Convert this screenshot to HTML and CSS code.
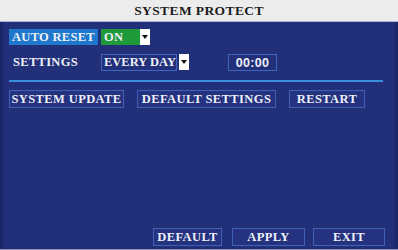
FILE: index.html
```html
<!DOCTYPE html>
<html lang="en">
<head>
	<meta charset="utf-8" />
	<title>System Protect</title>
	<link rel="stylesheet" href="styles.css">
</head>
<body>
	<div class="screen">
		<header class="title">SYSTEM PROTECT</header>
		<main class="panel">
			<div class="row">
				<span class="label label-active">AUTO RESET</span>
				<span class="combo combo-on">
					<span class="combo-value">ON</span>
					<span class="combo-arrow"></span>
				</span>
			</div>
			<div class="row row-settings">
				<span class="label">SETTINGS</span>
				<span class="combo combo-day">
					<span class="combo-value">EVERY DAY</span>
					<span class="combo-arrow"></span>
				</span>
				<span class="field">00:00</span>
			</div>
			<hr class="divider" />
			<div class="row row-actions">
				<button class="btn btn-update">SYSTEM UPDATE</button>
				<button class="btn btn-defaults">DEFAULT SETTINGS</button>
				<button class="btn btn-restart">RESTART</button>
			</div>
			<div class="footer">
				<button class="btn btn-default">DEFAULT</button>
				<button class="btn btn-apply">APPLY</button>
				<button class="btn btn-exit">EXIT</button>
			</div>
		</main>
	</div>
</body>
</html>
```

FILE: styles.css
```css
body {
	margin: 0;
	background-color: #223079;
	font-family: 'Liberation Serif', 'DejaVu Serif', serif;
	font-weight: bold;
	color: #eef0f8;
}

.screen {
	width: 398px;
	height: 250px;
	display: flex;
	flex-direction: column;
	background-color: #223079;
	box-shadow: inset 4px 0 3px -1px #1b2768, inset -4px 0 3px -1px #1b2768;
	border-bottom: 1px solid #8f98c0;
	box-sizing: border-box;
}

.title {
	height: 21px;
	line-height: 22px;
	text-align: center;
	background-color: #ececec;
	color: #1c1c1c;
	font-size: 13.5px;
	letter-spacing: 0.4px;
	border-bottom: 1px solid #a9b6dc;
}

.panel {
	flex: 1;
	display: flex;
	flex-direction: column;
	padding: 7px 15px 3px 9px;
}

.row {
	display: flex;
	align-items: center;
	font-size: 12.5px;
	letter-spacing: 0.3px;
	white-space: nowrap;
}

.label {
	width: 89px;
	height: 16px;
	line-height: 17px;
	padding-left: 3px;
	box-sizing: border-box;
}

.label-active {
	background-color: #1f78cc;
}

.combo {
	display: flex;
	height: 16px;
	margin-left: 3px;
}

.combo-value {
	line-height: 17px;
	padding-left: 3px;
	box-sizing: border-box;
	overflow: hidden;
}

.combo-arrow {
	width: 10px;
	background-color: #ffffff;
	position: relative;
}

.combo-arrow::after {
	content: '';
	position: absolute;
	left: 2px;
	top: 6px;
	border-style: solid;
	border-width: 4px 3px 0 3px;
	border-color: #111111 transparent transparent transparent;
}

.combo-on .combo-value {
	width: 39px;
	background-color: #1f9a3a;
}

.row-settings {
	margin-top: 8px;
	height: 18px;
}

.row-settings .label {
	padding-left: 4px;
}

.combo-day {
	height: 17px;
}

.combo-day .combo-value {
	width: 76px;
	padding-left: 2px;
	border: 1px solid #3f66bc;
	line-height: 15px;
	letter-spacing: 0;
}

.combo-day .combo-arrow {
	margin-left: 2px;
	height: 16px;
}

.field {
	margin-left: 39px;
	width: 49px;
	height: 17px;
	line-height: 17px;
	text-align: center;
	border: 1px solid #3f66bc;
	box-sizing: border-box;
	font-family: 'Liberation Sans', sans-serif;
	letter-spacing: 0.3px;
}

.divider {
	margin: 9px 0 0 0;
	height: 2px;
	border: 0;
	background-color: #3a8ee0;
}

.btn {
	height: 18px;
	padding: 0;
	border: 1px solid #3f62b6;
	background-color: #24327f;
	color: #eef0f8;
	font-family: inherit;
	font-weight: bold;
	font-size: 12.5px;
	letter-spacing: 0.4px;
	text-align: center;
	white-space: nowrap;
}

.row-actions {
	margin-top: 8px;
	gap: 13px;
}

.btn-update { width: 115px; }
.btn-defaults { width: 139px; }
.btn-restart { width: 76px; }

.footer {
	margin-top: auto;
	margin-right: -2px;
	display: flex;
	justify-content: flex-end;
	gap: 10px;
}

.btn-default { width: 69px; }
.btn-apply { width: 73px; margin-right: -2px; }
.btn-exit { width: 72px; }
```
